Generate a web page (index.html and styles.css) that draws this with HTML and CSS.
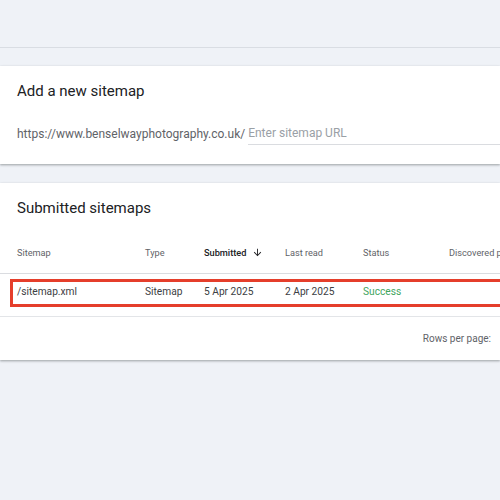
FILE: index.html
```html
<!DOCTYPE html>
<html>
<head>
<meta charset="utf-8">
<link rel="stylesheet" href="styles.css">
</head>
<body>
<div class="topbar"></div>
<section class="card add-card">
  <h2 class="card-title">Add a new sitemap</h2>
  <div class="url-row">
    <span class="prefix">https://www.benselwayphotography.co.uk/</span>
    <span class="url-input">Enter sitemap URL</span>
  </div>
</section>
<section class="card list-card">
  <h2 class="card-title">Submitted sitemaps</h2>
  <div class="table">
    <div class="row head">
      <span>Sitemap</span>
      <span>Type</span>
      <span class="sorted">Submitted
        <svg class="arrow" viewBox="0 0 24 24" width="11" height="11"><path d="M20 12l-1.41-1.41L13 16.17V4h-2v12.17l-5.58-5.59L4 12l8 8 8-8z" fill="#202124"/></svg>
      </span>
      <span>Last read</span>
      <span>Status</span>
      <span class="nowrap">Discovered pages</span>
    </div>
    <div class="row data">
      <span>/sitemap.xml</span>
      <span>Sitemap</span>
      <span>5 Apr 2025</span>
      <span>2 Apr 2025</span>
      <span class="success">Success</span>
      <span></span>
      <div class="highlight"></div>
    </div>
  </div>
  <div class="footer">
    <span>Rows per page:</span>
  </div>
</section>
</body>
</html>
```
FILE: styles.css
```css
html, body {
  margin: 0;
  padding: 0;
}
body {
  background: #eff2f7;
  font-family: Roboto, "Liberation Sans", sans-serif;
  width: 500px;
  height: 500px;
  overflow: hidden;
}
.topbar {
  height: 47px;
  border-bottom: 1px solid #d9dde3;
}
.card {
  background: #fff;
  box-shadow: 0 1px 2px rgba(60, 64, 67, 0.35), 0 1px 3px rgba(60, 64, 67, 0.15);
  overflow: hidden;
}
.add-card {
  margin-top: 18px;
  height: 98px;
}
.list-card {
  margin-top: 19px;
  height: 177px;
}
.card-title {
  margin: 0;
  font-weight: 400;
  font-size: 15px;
  color: #202124;
  padding-left: 17px;
  line-height: 20px;
}
.add-card .card-title {
  padding-top: 15px;
}
.list-card .card-title {
  padding-top: 15px;
}
.url-row {
  display: flex;
  align-items: flex-end;
  margin-top: 24px;
  padding-left: 17px;
  font-size: 12px;
  height: 20px;
}
.prefix {
  color: #5f6368;
  line-height: 16px;
  padding-bottom: 3px;
  white-space: nowrap;
}
.url-input {
  flex: 1;
  margin-left: 3px;
  color: #9aa0a6;
  line-height: 16px;
  padding-bottom: 3px;
  border-bottom: 1px solid #dadce0;
  white-space: nowrap;
}
.table {
  margin-top: 14px;
}
.row {
  display: grid;
  grid-template-columns: 128px 59px 81px 78px 86px 200px;
  padding-left: 17px;
  align-items: center;
  position: relative;
}
.row span {
  white-space: nowrap;
}
.head {
  height: 41px;
  font-size: 9.2px;
  color: #5f6368;
  border-bottom: 1px solid #dadce0;
}
.sorted {
  color: #202124;
  font-weight: 500;
  display: flex;
  align-items: center;
}
.arrow {
  margin-left: 6px;
}
.data {
  height: 35px;
  padding-bottom: 7px;
  font-size: 10.2px;
  color: #3c4043;
  border-bottom: 1px solid #e3e5e8;
}
.success {
  color: #3fa55e;
}
.highlight {
  position: absolute;
  left: 10px;
  top: 5px;
  width: 520px;
  height: 22px;
  border: 3px solid #e53e2b;
}
.footer {
  display: flex;
  justify-content: flex-end;
  padding-right: 9px;
  height: 43px;
  align-items: center;
  font-size: 10px;
  color: #5f6368;
}
```
